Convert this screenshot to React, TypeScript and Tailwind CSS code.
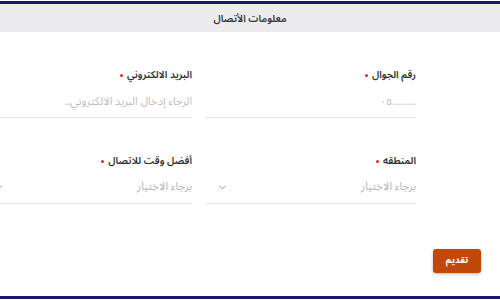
import { ChevronDown } from "lucide-react";

const fieldInput =
  "h-[36px] w-full border-b border-[#e6e6e6] bg-transparent pt-[3px] text-[11px] text-[#333] outline-none placeholder:text-[#bdbdbd]";

const Label = ({ text }: { text: string }) => (
  <label className="flex h-[14px] items-center gap-[4px] text-[10px] font-semibold leading-[14px] text-[#2f2f2f]">
    <span>{text}</span>
    <span className="h-[3px] w-[3px] rounded-full bg-[#e0262b]" />
  </label>
);

const SelectField = ({ label }: { label: string }) => (
  <div className="flex flex-col">
    <Label text={label} />
    <div className="flex h-[36px] items-center justify-between border-b border-[#e6e6e6] pt-[3px] pl-[12px]">
      <span className="text-[11px] text-[#b3b3b3]">برجاء الاختيار</span>
      <ChevronDown className="h-[11px] w-[11px] text-[#888]" strokeWidth={2} />
    </div>
  </div>
);

export default function App() {
  return (
    <div
      dir="rtl"
      className="h-[300px] w-full overflow-hidden bg-white pt-px font-['Noto_Sans_Arabic','Noto_Sans',sans-serif]"
    >
      <div className="flex h-[298px] flex-col border-y-[3px] border-[#19186a]">
        <div className="flex h-[28px] items-center justify-center bg-[#ececef] text-[10px] font-semibold text-[#333]">
          معلومات الأتصال
        </div>

        <div className="pr-[84px] pt-[36px]">
          <div className="grid grid-cols-[211px_211px] gap-x-[13px] gap-y-[36px]">
            <div className="flex flex-col">
              <Label text="رقم الجوال" />
              <input className={fieldInput} placeholder="........٠٥" />
            </div>
            <div className="flex flex-col">
              <Label text="البريد الالكتروني" />
              <input className={fieldInput} placeholder="الرجاء إدخال البريد الالكتروني.." />
            </div>
            <SelectField label="المنطقه" />
            <SelectField label="أفضل وقت للاتصال" />
          </div>
        </div>

        <div className="flex pr-[19px] pt-[45px]">
          <button className="h-[24px] w-[48px] rounded-[3px] bg-[#c1480b] text-[9px] font-bold text-white shadow-[0_1px_3px_rgba(0,0,0,0.3)]">
            تقديم
          </button>
        </div>
      </div>
    </div>
  );
}
